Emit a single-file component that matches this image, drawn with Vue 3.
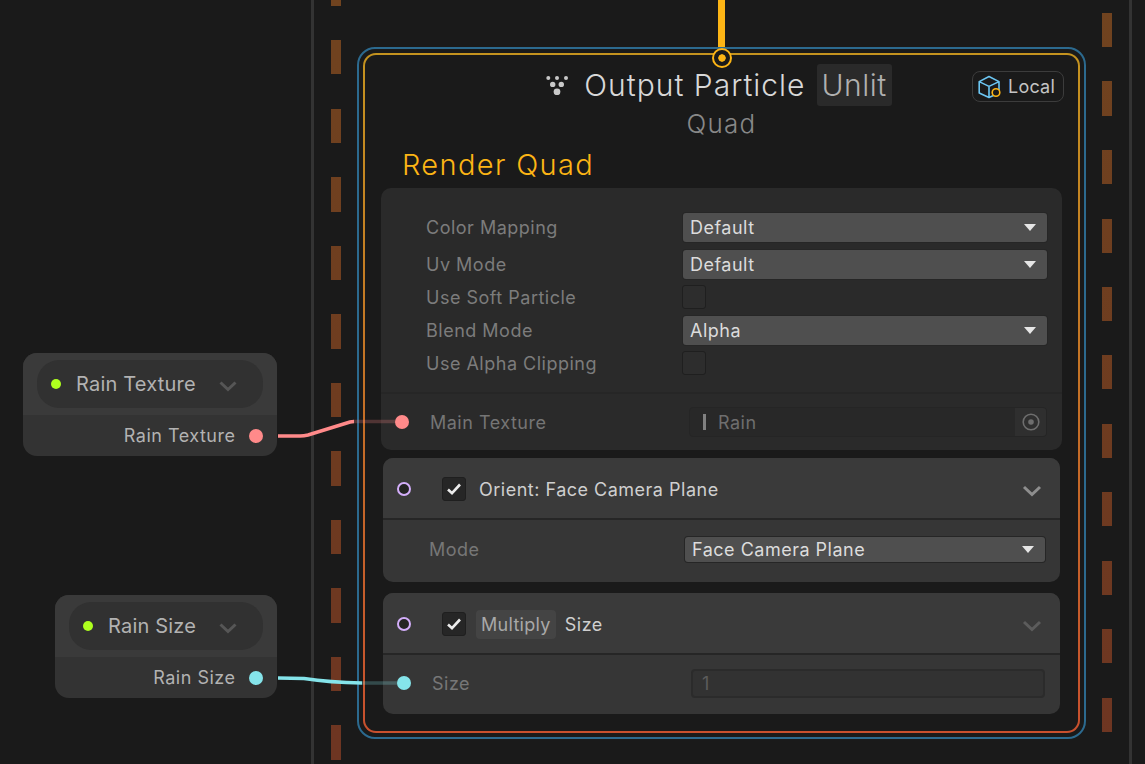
<template>
  <div class="graph">
    <!-- background edges -->
    <div class="rail rail-left"></div>
    <div class="rail rail-right"></div>
    <div class="dash dash-left"></div>
    <div class="dash dash-right"></div>
    <div class="flow-wire"></div>

    <!-- property nodes -->
    <div v-for="node in propertyNodes" :key="node.name" class="prop-node" :class="node.cls">
      <div class="prop-head">
        <div class="prop-pill">
          <span class="prop-dot"></span>
          <span class="prop-name">{{ node.name }}</span>
          <svg class="prop-chevron" width="20" height="12" viewBox="0 0 20 12">
            <path d="M2.5 2.5 L10 9.5 L17.5 2.5" fill="none" stroke="#565656" stroke-width="3" />
          </svg>
        </div>
      </div>
      <div class="prop-out">
        <span>{{ node.name }}</span>
        <i class="port" :style="{ background: node.color }"></i>
      </div>
    </div>

    <!-- output context -->
    <div class="context-outer">
      <div class="context">
        <div class="title-row">
          <svg class="particle-icon" width="24" height="20" viewBox="0 0 24 20">
            <g fill="#c8c8c8">
              <circle cx="3.3" cy="3" r="2" />
              <circle cx="12" cy="3" r="2" />
              <circle cx="21" cy="3" r="2" />
              <circle cx="7.7" cy="9.4" r="2.7" />
              <circle cx="16.3" cy="9.4" r="2.7" />
              <circle cx="12" cy="16.8" r="3.4" />
            </g>
          </svg>
          <span class="title">Output Particle</span>
          <span class="title-tag">Unlit</span>
        </div>
        <div class="subtitle">Quad</div>
        <div class="section-title">Render Quad</div>

        <div class="local-badge">
          <svg width="24" height="24" viewBox="0 0 24 24">
            <path d="M11 1.5 L21 6.6 L21 18 L11 22.5 L1.2 18 L1.2 6.6 Z M1.2 6.6 L11 11.4 L21 6.6 M11 11.4 L11 22.5" fill="none" stroke="#6cc6f2" stroke-width="1.6" stroke-linejoin="round" />
            <circle cx="18" cy="17.5" r="3.8" fill="#1a1a1a" stroke="#fdb515" stroke-width="1.6" />
          </svg>
          <span>Local</span>
        </div>

        <div class="settings">
          <div class="settings-rows">
            <div v-for="row in settingRows" :key="row.label" class="setting" :class="{ 'setting-check': !row.value }">
              <span class="setting-label">{{ row.label }}</span>
              <div v-if="row.value" class="dropdown">
                <span>{{ row.value }}</span>
                <i class="caret"></i>
              </div>
              <div v-else class="checkbox"></div>
            </div>
          </div>
          <div class="texture-row">
            <i class="port port-texture"></i>
            <span class="texture-label">Main Texture</span>
            <div class="object-field">
              <i class="object-bar"></i>
              <span class="object-name">Rain</span>
              <div class="object-pick">
                <svg width="20" height="20" viewBox="0 0 20 20">
                  <circle cx="10" cy="10" r="7.8" fill="none" stroke="#6e6e6e" stroke-width="1.6" />
                  <circle cx="10" cy="10" r="2.8" fill="#6e6e6e" />
                </svg>
              </div>
            </div>
          </div>
        </div>

        <div class="block block-orient">
          <div class="block-head">
            <i class="flow-port"></i>
            <div class="checkbox checkbox-on">
              <svg width="16" height="14" viewBox="0 0 16 14">
                <path d="M2 7.5 L6 11.2 L14 2.5" fill="none" stroke="#ececec" stroke-width="2.6" />
              </svg>
            </div>
            <span class="block-title">Orient: Face Camera Plane</span>
            <svg class="block-chevron" width="20" height="12" viewBox="0 0 20 12">
              <path d="M2 2 L10 9.5 L18 2" fill="none" stroke="#8e8e8e" stroke-width="3" />
            </svg>
          </div>
          <div class="block-body">
            <span class="mode-label">Mode</span>
            <div class="dropdown dropdown-mode">
              <span>Face Camera Plane</span>
              <i class="caret"></i>
            </div>
          </div>
        </div>

        <div class="block block-size">
          <div class="block-head">
            <i class="flow-port"></i>
            <div class="checkbox checkbox-on">
              <svg width="16" height="14" viewBox="0 0 16 14">
                <path d="M2 7.5 L6 11.2 L14 2.5" fill="none" stroke="#ececec" stroke-width="2.6" />
              </svg>
            </div>
            <span class="block-tag">Multiply</span>
            <span class="block-title">Size</span>
            <svg class="block-chevron" width="20" height="12" viewBox="0 0 20 12">
              <path d="M2 2 L10 9.5 L18 2" fill="none" stroke="#5c5c5c" stroke-width="3" />
            </svg>
          </div>
          <div class="block-body">
            <i class="port port-size"></i>
            <span class="size-label">Size</span>
            <div class="number-field">1</div>
          </div>
        </div>
      </div>
    </div>

    <i class="flow-anchor"></i>

    <!-- wires between the ports -->
    <svg class="wires" width="1145" height="764" viewBox="0 0 1145 764">
      <path d="M353 421.5 L396 421.5" stroke="rgba(255,138,138,.24)" stroke-width="3.5" fill="none" />
      <path d="M278 436 L300 436 Q304 436 308 435 L350 422 Q352 421.5 354 421.5" stroke="#ff8a8a" stroke-width="3.5" fill="none" />
      <path d="M362 683 L398 683" stroke="rgba(133,228,234,.24)" stroke-width="3.5" fill="none" />
      <path d="M278 678 L304 678.5 Q330 682.5 362 683" stroke="#85e4ea" stroke-width="3.5" fill="none" />
    </svg>
  </div>
</template>

<script setup>
const propertyNodes = [
  { name: 'Rain Texture', cls: 'prop-texture', color: '#ff8a8a' },
  { name: 'Rain Size', cls: 'prop-size', color: '#85e4ea' },
]

const settingRows = [
  { label: 'Color Mapping', value: 'Default' },
  { label: 'Uv Mode', value: 'Default' },
  { label: 'Use Soft Particle' },
  { label: 'Blend Mode', value: 'Alpha' },
  { label: 'Use Alpha Clipping' },
]
</script>

<style scoped>
.graph {
  position: relative;
  width: 1145px;
  height: 764px;
  overflow: hidden;
  background: #1a1a1a;
  font-family: Inter, "Liberation Sans", sans-serif;
  font-size: 18px;
  letter-spacing: 0.5px;
}
.graph i { display: block; }

/* ── 背景线 ── */
.rail {
  position: absolute;
  top: 0;
  bottom: 0;
  width: 3px;
  background: #333;
}
.rail-left { left: 311px; }
.rail-right { left: 1129px; }
.dash {
  position: absolute;
  top: 0;
  width: 10px;
  height: 764px;
  background: linear-gradient(to bottom, #70431f 0%, #6e3b20 60%, #6e3522 100%);
}
.dash-left {
  left: 331px;
  -webkit-mask-image: repeating-linear-gradient(to bottom, #000 -28px, #000 6px, transparent 6px, transparent 40.5px);
  mask-image: repeating-linear-gradient(to bottom, #000 -28px, #000 6px, transparent 6px, transparent 40.5px);
}
.dash-right {
  left: 1102px;
  -webkit-mask-image: repeating-linear-gradient(to bottom, transparent 0, transparent 13px, #000 13px, #000 47px, transparent 47px, transparent 68.5px);
  mask-image: repeating-linear-gradient(to bottom, transparent 0, transparent 13px, #000 13px, #000 47px, transparent 47px, transparent 68.5px);
}
.flow-wire {
  position: absolute;
  left: 718px;
  top: 0;
  width: 7px;
  height: 48px;
  background: #fdb515;
}
.flow-anchor {
  position: absolute;
  left: 711.5px;
  top: 47.5px;
  width: 20px;
  height: 20px;
  box-sizing: border-box;
  border: 2.5px solid #fdb515;
  border-radius: 50%;
  background: radial-gradient(circle, #fdb515 0 3.4px, #1a1a1a 4px);
}
.wires {
  position: absolute;
  left: 0;
  top: 0;
  pointer-events: none;
}

/* ── 端口 ── */
.port {
  width: 14px;
  height: 14px;
  border-radius: 50%;
  flex-shrink: 0;
}
.port-texture { background: #ff8a8a; }
.port-size { background: #85e4ea; }
.flow-port {
  width: 14px;
  height: 14px;
  box-sizing: border-box;
  border: 2.5px solid #d3aefa;
  border-radius: 50%;
  background: #242424;
  flex-shrink: 0;
}

/* ── 属性节点 ── */
.prop-node {
  position: absolute;
  border-radius: 14px;
  overflow: hidden;
  background: #333;
  color: #b2b2b2;
}
.prop-texture { left: 23px; top: 353px; width: 254px; }
.prop-size { left: 55px; top: 595px; width: 222px; }
.prop-head {
  height: 62px;
  box-sizing: border-box;
  padding: 6.5px 14px 0;
  background: #3a3a3a;
}
.prop-pill {
  display: flex;
  align-items: center;
  height: 48px;
  border-radius: 22px;
  background: #313131;
  padding: 0 25px 0 14px;
}
.prop-dot {
  width: 10px;
  height: 10px;
  border-radius: 50%;
  background: #aeff1e;
  margin-right: 15px;
  flex-shrink: 0;
}
.prop-name {
  flex: 1;
  white-space: nowrap;
  font-size: 20px;
  letter-spacing: 0.2px;
}
.prop-chevron { flex-shrink: 0; margin-top: 4px; }
.prop-out {
  display: flex;
  align-items: center;
  justify-content: flex-end;
  gap: 13px;
  height: 41px;
  padding-right: 14.5px;
}

/* ── 上下文节点 ── */
.context-outer {
  position: absolute;
  left: 357px;
  top: 47px;
  width: 729px;
  height: 692px;
  box-sizing: border-box;
  padding: 4px;
  border: 2px solid #2c6a8f;
  border-radius: 18px;
}
.context {
  position: relative;
  height: 100%;
  box-sizing: border-box;
  border: 2px solid transparent;
  border-radius: 13px;
  background:
    linear-gradient(#1a1a1a, #1a1a1a) padding-box,
    linear-gradient(to bottom, #c4931f 0%, #c47126 50%, #c8502e 100%) border-box;
  padding: 9px 18px 0;
}
.title-row {
  display: flex;
  align-items: center;
  justify-content: center;
  height: 42px;
  padding-right: 6px;
}
.particle-icon { margin-right: 15px; }
.title {
  font-size: 30px;
  font-weight: 300;
  letter-spacing: 1px;
  color: #d8d8d8;
  white-space: nowrap;
}
.title-tag {
  margin-left: 11px;
  padding: 0 5px;
  height: 42px;
  line-height: 42px;
  font-size: 30px;
  font-weight: 300;
  letter-spacing: 0.5px;
  color: #b0b0b0;
  background: #2a2a2a;
  border-radius: 3px;
}
.subtitle {
  margin-top: 1px;
  height: 34px;
  line-height: 34px;
  text-align: center;
  font-size: 26px;
  font-weight: 300;
  letter-spacing: 1.2px;
  color: #888;
}
.section-title {
  margin-top: 6px;
  padding-left: 19px;
  height: 36px;
  line-height: 36px;
  font-size: 29px;
  font-weight: 300;
  letter-spacing: 1.35px;
  color: #fdb515;
  margin-bottom: 5px;
}
.local-badge {
  position: absolute;
  right: 14px;
  top: 16px;
  display: flex;
  align-items: center;
  gap: 6px;
  height: 31px;
  box-sizing: border-box;
  padding: 0 8px 0 5px;
  border: 1px solid #3c3c3c;
  border-radius: 8px;
  color: #c4c4c4;
  letter-spacing: 0.2px;
}

/* ── 设置面板 ── */
.settings {
  margin: 0 -2px;
  border-radius: 10px;
  background: #2a2a2a;
}
.settings-rows { padding: 20.5px 15px 14.5px 45px; }
.setting {
  display: flex;
  align-items: center;
  height: 37px;
}
.setting-check { height: 29px; }
.setting-label {
  width: 257px;
  color: #7c7c7c;
  flex-shrink: 0;
}
.dropdown {
  display: flex;
  align-items: center;
  justify-content: space-between;
  flex: 1;
  height: 29px;
  box-sizing: border-box;
  padding: 0 11px 0 7px;
  background: #4f4f4f;
  border-radius: 3px;
  box-shadow: 0 0 0 1px #262626;
  color: #dcdcdc;
}
.caret {
  width: 0;
  height: 0;
  border-left: 6.5px solid transparent;
  border-right: 6.5px solid transparent;
  border-top: 7px solid #e6e6e6;
}
.checkbox {
  display: flex;
  align-items: center;
  justify-content: center;
  width: 24px;
  height: 24px;
  margin-left: -1px;
  box-sizing: border-box;
  border: 1px solid #1f1f1f;
  border-radius: 3px;
  background: #2d2d2d;
  flex-shrink: 0;
}
.texture-row {
  display: flex;
  align-items: center;
  height: 58px;
  border-top: 2px solid #262626;
  box-sizing: border-box;
  padding: 0 15px 0 14px;
  color: #757575;
}
.texture-label {
  margin-left: 21px;
  width: 259px;
  flex-shrink: 0;
}
.object-field {
  display: flex;
  align-items: center;
  flex: 1;
  height: 30px;
  box-sizing: border-box;
  border: 1px solid #252525;
  border-radius: 4px;
  background: #282828;
  overflow: hidden;
}
.object-bar {
  width: 3px;
  height: 16px;
  margin-left: 13px;
  background: #808080;
}
.object-name {
  flex: 1;
  margin-left: 12px;
  color: #6e6e6e;
}
.object-pick {
  display: flex;
  align-items: center;
  justify-content: center;
  width: 31px;
  height: 100%;
  background: #2f2f2f;
}

/* ── 块 ── */
.block {
  border-radius: 10px;
  overflow: hidden;
  background: #363636;
}
.block-orient { margin-top: 8px; }
.block-size { margin-top: 11.5px; }
.block-head {
  display: flex;
  align-items: center;
  height: 62px;
  box-sizing: border-box;
  padding: 2px 18px 0 14px;
  background: #3a3a3a;
  border-bottom: 2px solid #262626;
  color: #cfcfcf;
}
.block-head .checkbox {
  margin-left: 31px;
  background: #262626;
}
.block-head > .block-title { margin-left: 13px; flex: 1; }
.block-tag {
  margin-left: 10px;
  padding: 0 5px;
  height: 29px;
  line-height: 29px;
  border-radius: 4px;
  background: #444;
  color: #a8a8a8;
  letter-spacing: 0.3px;
}
.block-tag + .block-title { margin-left: 9px; }
.block-chevron { flex-shrink: 0; margin-top: 3px; }
.block-body {
  display: flex;
  align-items: center;
  box-sizing: border-box;
  padding: 0 15px 0 14px;
  color: #777;
}
.block-orient .block-body { height: 61.5px; padding-bottom: 2px; }
.block-size .block-body { height: 59px; padding-bottom: 3px; }
.mode-label {
  margin-left: 32px;
  width: 256px;
  flex-shrink: 0;
}
.dropdown-mode { height: 25px; }
.size-label {
  margin-left: 21px;
  width: 259px;
  flex-shrink: 0;
}
.number-field {
  flex: 1;
  height: 29px;
  line-height: 25px;
  box-sizing: border-box;
  padding-left: 9px;
  border: 2px solid #2b2b2b;
  border-radius: 4px;
  background: #323232;
  color: #5c5c5c;
}
</style>

<style>
html, body { background: #1a1a1a; }
</style>
